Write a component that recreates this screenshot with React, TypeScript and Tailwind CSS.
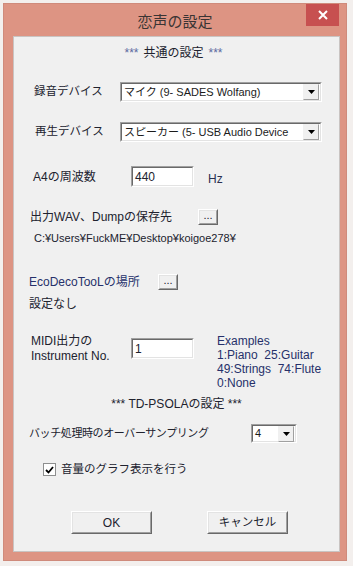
import React from "react";

const F = "font-['Liberation_Sans','Noto_Sans_CJK_JP',sans-serif]";

function Sunken({ className, children }: { className: string; children?: React.ReactNode }) {
  return (
    <div className={"border border-t-[#a0a0a0] border-l-[#a0a0a0] border-r-[#ffffff] border-b-[#ffffff] " + className}>
      <div className="flex h-full w-full items-center border border-t-[#696969] border-l-[#696969] border-r-[#e3e3e3] border-b-[#e3e3e3] bg-white">
        {children}
      </div>
    </div>
  );
}

function Raised({ className, children }: { className: string; children?: React.ReactNode }) {
  return (
    <div className={"border border-t-[#ffffff] border-l-[#ffffff] border-r-[#696969] border-b-[#696969] " + className}>
      <div className="flex h-full w-full items-center justify-center border border-t-[#e3e3e3] border-l-[#e3e3e3] border-r-[#a0a0a0] border-b-[#a0a0a0] bg-[#f0f0f0]">
        {children}
      </div>
    </div>
  );
}

function Arrow() {
  return (
    <div className="mr-[1px] flex h-[16px] w-[16px] shrink-0 items-center justify-center border border-t-[#f0f0f0] border-l-[#f0f0f0] border-r-[#a0a0a0] border-b-[#a0a0a0] bg-[#f0f0f0]">
      <svg width="7" height="4" viewBox="0 0 7 4">
        <path d="M0 0H7L3.5 4Z" fill="#000" />
      </svg>
    </div>
  );
}

function Select({ className, text }: { className: string; text: string }) {
  return (
    <Sunken className={className}>
      <div className="flex-1 overflow-hidden whitespace-nowrap pl-[2px] text-[11px] leading-none text-[#1b1b1b]">{text}</div>
      <Arrow />
    </Sunken>
  );
}

export default function App() {
  return (
    <div className={"relative h-[566px] w-[353px] overflow-hidden bg-[#f3efed] pl-[3px] pt-[3px] " + F}>
      <div className="relative h-[558px] w-[344px] border border-[#cf8a7b] bg-[#dd9483] pb-[8px] pl-[9px] pr-[6px] pt-[32px]">
        {/* title */}
        <div className="absolute left-0 right-0 top-[8px] text-center text-[15px] leading-[20px] text-[#3a3434]">恋声の設定</div>
        <div className="absolute right-[7px] top-[0px] flex h-[22px] w-[33px] items-center justify-center bg-[#c75050]">
          <svg width="10" height="10" viewBox="0 0 10 10">
            <path d="M1 1L9 9M9 1L1 9" stroke="#fff" strokeWidth="2" />
          </svg>
        </div>

        {/* client */}
        <div className="flex h-[516px] w-[327px] flex-col border border-[#c9c4c2] bg-[#f0f0f0] text-[12px] text-[#20222e]">
          <div className="mt-[8px] flex h-[16px] items-center justify-center pr-[6px] leading-none">
            <span className="text-[#5b6aa0]">***</span>
            <span className="mx-[5px]">共通の設定</span>
            <span className="text-[#5b6aa0]">***</span>
          </div>

          <div className="mt-[21px] flex h-[20px] items-center pl-[20px]">
            <div className="w-[86px] text-[11.5px] leading-none">録音デバイス</div>
            <Select className="h-[20px] w-[202px]" text="マイク (9- SADES Wolfang)" />
          </div>

          <div className="mt-[20px] flex h-[20px] items-center pl-[21px]">
            <div className="w-[85px] text-[11.5px] leading-none">再生デバイス</div>
            <Select className="h-[20px] w-[202px]" text="スピーカー (5- USB Audio Device" />
          </div>

          <div className="mt-[24px] flex h-[21px] items-center pl-[19px]">
            <div className="w-[98px] leading-none">A4の周波数</div>
            <Sunken className="h-[21px] w-[63px]">
              <span className="pl-[2px] leading-none">440</span>
            </Sunken>
            <div className="ml-[14px] mt-[4px] leading-none text-[#2a3050]">Hz</div>
          </div>

          <div className="mt-[22px] flex h-[16px] items-center pl-[16px]">
            <div className="w-[168px] leading-none">出力WAV、Dumpの保存先</div>
            <Raised className="h-[16px] w-[20px]">
              <span className="mt-[-4px] text-[11px] leading-none">...</span>
            </Raised>
          </div>

          <div className="mt-[5px] flex h-[16px] items-center pl-[20px] text-[11px] leading-none">C:¥Users¥FuckME¥Desktop¥koigoe278¥</div>

          <div className="mt-[28px] flex h-[16px] items-center pl-[15px]">
            <div className="w-[129px] leading-none text-[#26306a]">EcoDecoTooLの場所</div>
            <Raised className="h-[16px] w-[20px]">
              <span className="mt-[-4px] text-[11px] leading-none">...</span>
            </Raised>
          </div>

          <div className="mt-[6px] flex h-[16px] items-center pl-[15px] leading-none">設定なし</div>

          <div className="mt-[22px] flex h-[58px] pl-[17px]">
            <div className="w-[100px] leading-[15px]">
              <div>MIDI出力の</div>
              <div>Instrument No.</div>
            </div>
            <div className="pt-[4px]">
              <Sunken className="h-[21px] w-[63px]">
                <span className="pl-[2px] leading-none">1</span>
              </Sunken>
            </div>
            <div className="ml-[23px] whitespace-pre leading-[14px] text-[#26306a]">
              <div>Examples</div>
              <div>1:Piano  25:Guitar</div>
              <div>49:Strings  74:Flute</div>
              <div>0:None</div>
            </div>
          </div>

          <div className="mt-[4px] flex h-[16px] items-center justify-center leading-none">*** TD-PSOLAの設定 ***</div>

          <div className="mt-[12px] flex h-[19px] items-center pl-[15px]">
            <div className="w-[222px] text-[11px] leading-none tracking-[-0.4px]">バッチ処理時のオーバーサンプリング</div>
            <Select className="h-[19px] w-[46px]" text="4" />
          </div>

          <div className="mt-[20px] flex h-[13px] items-center pl-[29px]">
            <div className="flex h-[13px] w-[13px] items-center justify-center border border-[#8e8f8f] bg-white">
              <svg width="9" height="8" viewBox="0 0 9 8">
                <path d="M1 4L3.5 6.5L8 1" stroke="#000" strokeWidth="1.8" fill="none" />
              </svg>
            </div>
            <div className="ml-[5px] text-[11.5px] leading-none">音量のグラフ表示を行う</div>
          </div>

          <div className="mt-[35px] flex h-[23px] items-center pl-[57px]">
            <Raised className="h-[23px] w-[81px]">
              <span className="leading-none">OK</span>
            </Raised>
            <Raised className="ml-[55px] h-[23px] w-[81px]">
              <span className="text-[11.5px] leading-none">キャンセル</span>
            </Raised>
          </div>
        </div>
      </div>
    </div>
  );
}
